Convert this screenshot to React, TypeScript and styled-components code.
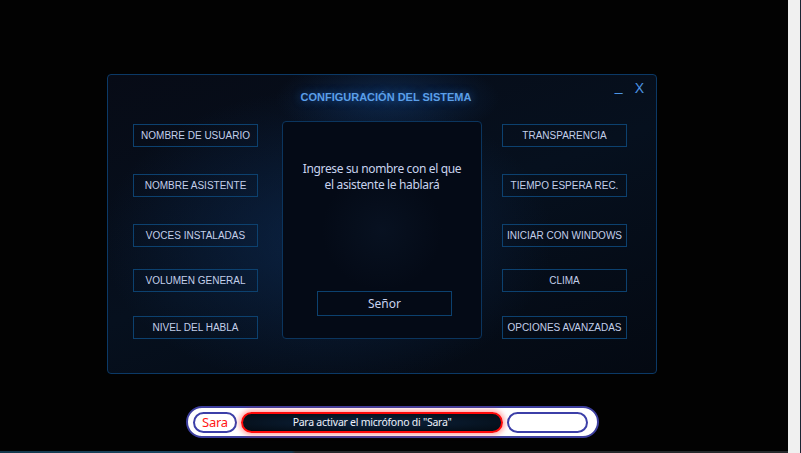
import React from "react";
import styled, { createGlobalStyle } from "styled-components";

const Global = createGlobalStyle`
  html, body { margin: 0; padding: 0; background: #000; }
  body { width: 801px; height: 453px; overflow: hidden; }
  #root { width: 801px; height: 453px; }
`;

const Screen = styled.div`
  display: grid;
  grid-template-columns: 788px 13px;
  grid-template-rows: 451px 2px;
  width: 801px;
  height: 453px;
  background: #020202;
`;

const Main = styled.div`
  display: flex;
  flex-direction: column;
  align-items: flex-start;
`;

const SideStrip = styled.div`
  grid-column: 2;
  grid-row: 1 / span 2;
  background: #f0f0f0;
  border-right: 1px solid #1c2433;
`;

const TaskStrip = styled.div`
  grid-column: 1;
  grid-row: 2;
  background: linear-gradient(90deg, #14384c 0%, #1b4660 20%, #163a52 37%, #26292c 37.5%, #26292c 100%);
`;

const Panel = styled.section`
  box-sizing: border-box;
  width: 550px;
  height: 300px;
  margin: 74px 0 0 107px;
  border: 1px solid #0b3966;
  border-radius: 4px;
  background:
    radial-gradient(ellipse 160px 60px at 51% 8%, rgba(18, 58, 110, 0.55), transparent 70%),
    radial-gradient(ellipse 300px 200px at 40% 55%, rgba(14, 46, 90, 0.6), transparent 75%),
    linear-gradient(160deg, #070b16 0%, #06101e 50%, #040912 100%);
  display: flex;
  flex-direction: column;
`;

const Header = styled.div`
  display: flex;
  height: 46px;
  padding-right: 12px;
`;

const Title = styled.h1`
  flex: 1;
  margin: 16px 0 0;
  padding-left: 49px;
  text-align: center;
  font: bold 11px/13px "Liberation Sans", Arial, sans-serif;
  color: #5b9fe8;
  text-shadow: 0 0 8px rgba(40, 110, 210, 0.7);
`;

const Controls = styled.div`
  display: flex;
  gap: 12px;
  margin-top: 5px;
  font: 14px/16px "Liberation Sans", Arial, sans-serif;
  color: #4c94e4;
`;

const Ctrl = styled.span<{ $lift?: number }>`
  position: relative;
  top: ${(p) => -(p.$lift ?? 0)}px;
  cursor: pointer;
`;

const Body = styled.div`
  display: flex;
  align-items: flex-start;
  padding: 0 29px 0 25px;
  gap: 24px;
`;

const Column = styled.div`
  display: flex;
  flex-direction: column;
  width: 125px;
`;

const RightColumn = styled(Column)`
  margin-left: -4px;
`;

const OptionButton = styled.button<{ $mt: number }>`
  box-sizing: border-box;
  width: 125px;
  height: 23px;
  margin-top: ${(p) => p.$mt}px;
  padding: 0;
  border: 1px solid #0c416f;
  background: transparent;
  color: #c3cfea;
  font: 10px/21px "Liberation Sans", Arial, sans-serif;
  text-align: center;
  white-space: nowrap;
  cursor: pointer;
`;

const CenterBox = styled.div`
  box-sizing: border-box;
  width: 200px;
  height: 218px;
  border: 1px solid #0b355e;
  border-radius: 4px;
  background:
    radial-gradient(circle 60px at 50% 50%, rgba(10, 22, 40, 0.6), transparent 100%),
    #040a16;
  display: flex;
  flex-direction: column;
`;

const Prompt = styled.p`
  margin: 39px 0 0;
  text-align: center;
  font: 12px/16px "Noto Sans", "Open Sans", sans-serif;
  letter-spacing: -0.35px;
  color: #c8d3ee;
`;

const PromptLine = styled.span`
  display: block;
`;

const ValueBox = styled.div`
  box-sizing: border-box;
  width: 135px;
  height: 25px;
  margin: auto 0 22px 34px;
  border: 1px solid #0c416f;
  color: #c8d3ee;
  font: 12px/23px "Noto Sans", "Open Sans", sans-serif;
  text-align: center;
`;

const MicBar = styled.div`
  box-sizing: border-box;
  display: flex;
  align-items: center;
  gap: 4px;
  width: 413px;
  height: 32px;
  margin: 32px 0 0 186px;
  padding: 0 9px 0 5px;
  background: #fff;
  border: 2px solid #3d3f9e;
  border-radius: 16px;
`;

const Pill = styled.div<{ $w: number }>`
  box-sizing: border-box;
  width: ${(p) => p.$w}px;
  height: 21px;
  border-radius: 11px;
  border: 2px solid #3c3fa8;
  background: #fff;
  display: flex;
  align-items: center;
  justify-content: center;
  font: 13px/1 "Noto Sans", "Open Sans", sans-serif;
  color: #ff1616;
  letter-spacing: -0.3px;
`;

const HintPill = styled.div`
  box-sizing: border-box;
  width: 264px;
  height: 21px;
  border-radius: 11px;
  border: 2px solid #ff0a0a;
  box-shadow: 0 0 5px 2px rgba(255, 60, 60, 0.45);
  background: radial-gradient(ellipse at 50% 50%, #0d2440 0%, #06121f 70%, #040b14 100%);
  display: flex;
  align-items: center;
  justify-content: center;
  font: 10.5px/1 "Noto Sans", "Open Sans", sans-serif;
  letter-spacing: -0.25px;
  color: #eef2fa;
`;

const leftButtons = [
  { label: "NOMBRE DE USUARIO", mt: 3 },
  { label: "NOMBRE ASISTENTE", mt: 27 },
  { label: "VOCES INSTALADAS", mt: 27 },
  { label: "VOLUMEN GENERAL", mt: 22 },
  { label: "NIVEL DEL HABLA", mt: 24 },
];

const rightButtons = [
  { label: "TRANSPARENCIA", mt: 3 },
  { label: "TIEMPO ESPERA REC.", mt: 27 },
  { label: "INICIAR CON WINDOWS", mt: 27 },
  { label: "CLIMA", mt: 22 },
  { label: "OPCIONES AVANZADAS", mt: 24 },
];

export default function App() {
  return (
    <>
      <Global />
      <Screen>
        <Main>
          <Panel>
            <Header>
              <Title>CONFIGURACIÓN DEL SISTEMA</Title>
              <Controls>
                <Ctrl $lift={2}>_</Ctrl>
                <Ctrl>X</Ctrl>
              </Controls>
            </Header>
            <Body>
              <Column>
                {leftButtons.map((b) => (
                  <OptionButton key={b.label} $mt={b.mt}>
                    {b.label}
                  </OptionButton>
                ))}
              </Column>
              <CenterBox>
                <Prompt>
                  <PromptLine>Ingrese su nombre con el que</PromptLine>
                  <PromptLine>el asistente le hablará</PromptLine>
                </Prompt>
                <ValueBox>Señor</ValueBox>
              </CenterBox>
              <RightColumn>
                {rightButtons.map((b) => (
                  <OptionButton key={b.label} $mt={b.mt}>
                    {b.label}
                  </OptionButton>
                ))}
              </RightColumn>
            </Body>
          </Panel>
          <MicBar>
            <Pill $w={44}>Sara</Pill>
            <HintPill>Para activar el micrófono di "Sara"</HintPill>
            <Pill $w={81} />
          </MicBar>
        </Main>
        <SideStrip />
        <TaskStrip />
      </Screen>
    </>
  );
}
